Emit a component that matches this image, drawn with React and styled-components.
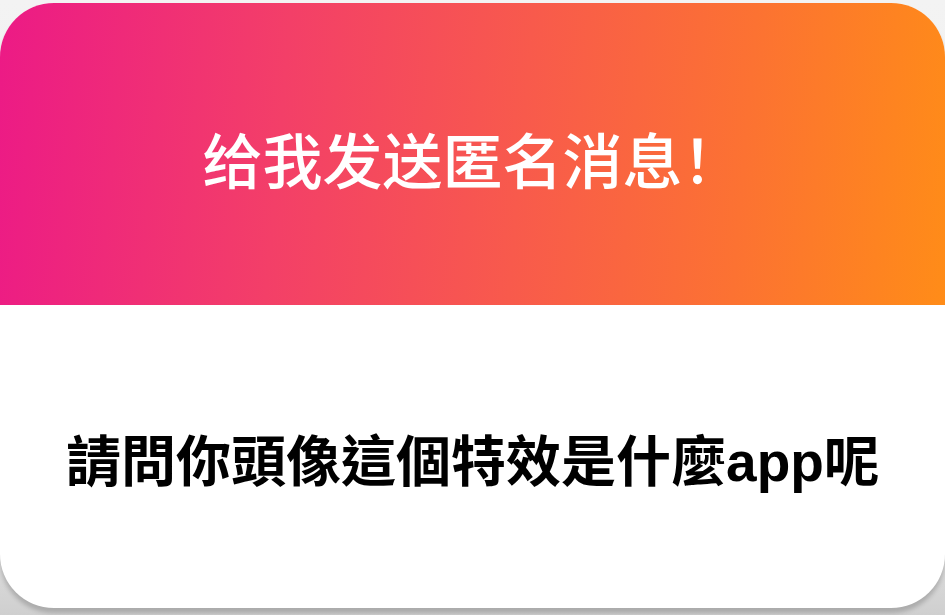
import React from 'react'
import styled, { createGlobalStyle } from 'styled-components';

const GlobalStyle = createGlobalStyle`
  html, body {
    margin: 0;
    padding: 0;
    background: linear-gradient(180deg, #f3f3f3 0%, #ececec 80%, #cfcfcf 100%);
    height: 615px;
    overflow: hidden;
  }
  * { box-sizing: border-box; }
`;

function App() {
  return (
    <>
      <GlobalStyle />
      <Page>
        <Card>
          <Header>
            <Title>给我发送匿名消息！</Title>
          </Header>
          <Body>
            <Message>請問你頭像這個特效是什麼app呢</Message>
          </Body>
        </Card>
      </Page>
    </>
  )
}

const Page = styled.div`
  width: 945px;
  height: 615px;
  padding-top: 3px;
`;

const Card = styled.div`
  width: 945px;
  height: 605px;
  border-radius: 54px;
  overflow: hidden;
  background: #fff;
  display: flex;
  flex-direction: column;
  box-shadow: 0 5px 4px rgba(0, 0, 0, 0.18);
`;

const Header = styled.div`
  height: 302px;
  display: flex;
  align-items: center;
  justify-content: center;
  padding-top: 8px;
  background: linear-gradient(95deg, #ec1a86 0%, #f33f68 30%, #f85a4c 55%, #fc7232 78%, #ff8c18 100%);
`;

const Title = styled.h1`
  margin: 0;
  color: #fff;
  font-family: "Noto Sans CJK SC", "Noto Sans", sans-serif;
  font-weight: 500;
  font-size: 60px;
  letter-spacing: 0;
  line-height: 1;
`;

const Body = styled.div`
  flex: 1;
  display: flex;
  align-items: center;
  justify-content: center;
  padding-top: 12px;
`;

const Message = styled.p`
  margin: 0;
  color: #000;
  font-family: "Liberation Sans", "Noto Sans CJK TC", sans-serif;
  font-weight: 700;
  font-size: 55px;
  line-height: 1;
`;

export default App;
